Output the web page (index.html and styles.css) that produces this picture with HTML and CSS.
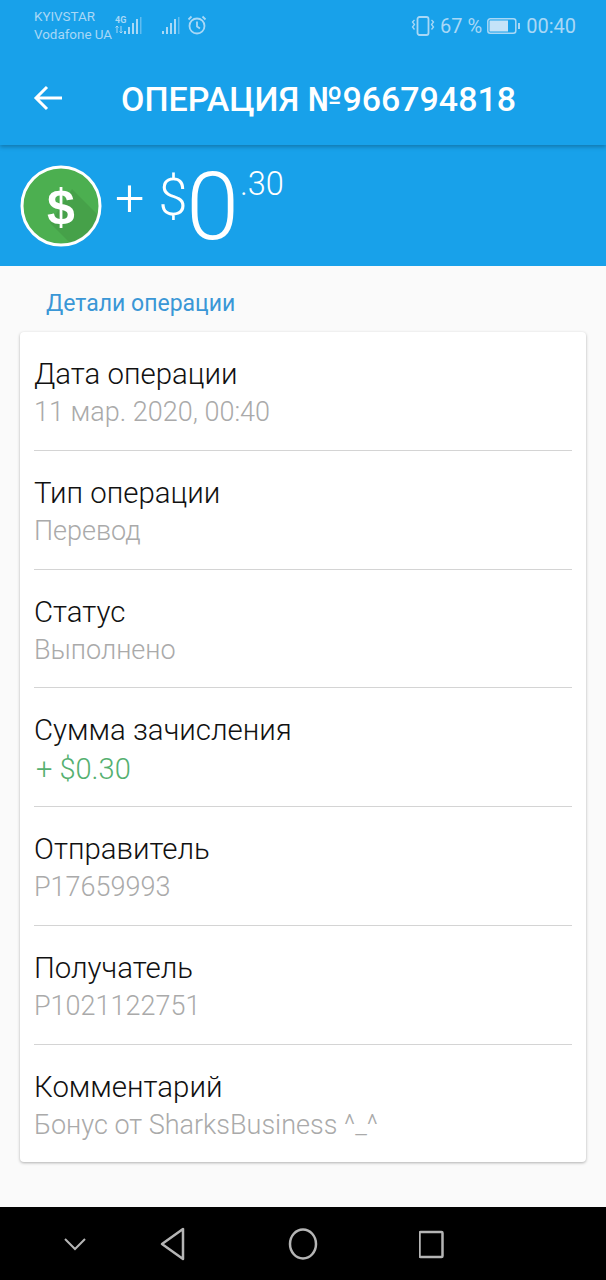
FILE: index.html
```html
<!DOCTYPE html>
<html lang="en">
  <head>
    <meta charset="UTF-8" />
    <meta name="viewport" content="width=device-width, initial-scale=1.0" />
    <title>Операция</title>
    <link rel="stylesheet" href="styles.css">
  </head>
  <body>
    <div class="screen">
      <header class="appbar">
        <div class="status">
          <div class="carriers">
            <span>KYIVSTAR</span>
            <span>Vodafone UA</span>
          </div>
          <svg class="status-signals" width="98" height="24" viewBox="0 0 98 24">
            <text x="1" y="9" class="net">4G</text>
            <path d="M3 12v7M1.500 13.500L3 12l1.500 1.500M7 12v7M5.500 17.500L7 19l1.500-1.500" fill="none" stroke="#a9d8f6" />
            <g fill="#a9d8f6">
              <rect x="10" y="17" width="2" height="3" />
              <rect x="14" y="13" width="2" height="7" />
              <rect x="18" y="9" width="2" height="11" />
              <rect x="22" y="5" width="2" height="15" />
              <rect x="26" y="3" width="1.500" height="17" opacity=".5" />
              <rect x="48" y="17" width="2" height="3" />
              <rect x="52" y="13" width="2" height="7" />
              <rect x="56" y="9" width="2" height="11" />
              <rect x="60" y="5" width="2" height="15" />
              <rect x="64" y="3" width="1.500" height="17" opacity=".5" />
            </g>
            <g fill="none" stroke="#a9d8f6" stroke-width="1.800">
              <circle cx="83" cy="12" r="7.500" />
              <path d="M83 7.500v5l3 2M74.500 5.500l3-3M91.500 5.500l-3-3" />
            </g>
          </svg>
          <div class="status-right">
            <svg width="24" height="24" viewBox="0 0 24 24" fill="none" stroke="#a9d8f6">
              <rect x="6.500" y="3" width="11" height="18" rx="2" stroke-width="1.800" />
              <path d="M3.500 6l-2 2 2 2.500-2 2.500 2 2.500M20.500 6l2 2-2 2.500 2 2.500-2 2.500" stroke-width="1.300" />
            </svg>
            <span class="battery-pct">67 %</span>
            <svg width="34" height="18" viewBox="0 0 34 18">
              <rect x=".800" y="1.800" width="28" height="14.500" rx="2.500" fill="none" stroke="#a9d8f6" stroke-width="1.500" />
              <rect x="2.500" y="3.500" width="18.500" height="11" fill="#c4e3f8" />
              <rect x="31" y="6" width="2" height="6" fill="#a9d8f6" />
            </svg>
            <span>00:40</span>
          </div>
        </div>
        <div class="toolbar">
          <svg class="back" width="30" height="26" viewBox="0 0 30 26" fill="none" stroke="#fff" stroke-width="3">
            <path d="M29 13H3M14 2L3 13l11 11" />
          </svg>
          <h1>ОПЕРАЦИЯ №966794818</h1>
        </div>
      </header>

      <section class="amount">
        <svg class="coin" width="82" height="82" viewBox="0 0 82 82">
          <circle cx="41" cy="41" r="39" fill="#4caf50" stroke="#fff" stroke-width="3" />
          <path d="M52 24l26 26A39 39 0 0 1 50 78L30 58z" fill="#000" opacity=".08" />
          <text x="41" y="59" text-anchor="middle" class="coin-sign">$</text>
        </svg>
        <span class="plus">+</span>
        <span class="dollar">$</span>
        <span class="whole">0</span>
        <span class="cents">.30</span>
      </section>

      <main class="content">
        <h2>Детали операции</h2>
        <div class="card">
          <div class="row">
            <div class="label">Дата операции</div>
            <div class="value">11 мар. 2020, 00:40</div>
          </div>
          <div class="row">
            <div class="label">Тип операции</div>
            <div class="value">Перевод</div>
          </div>
          <div class="row">
            <div class="label">Статус</div>
            <div class="value">Выполнено</div>
          </div>
          <div class="row">
            <div class="label">Сумма зачисления</div>
            <div class="value green">+ $0.30</div>
          </div>
          <div class="row">
            <div class="label">Отправитель</div>
            <div class="value">P17659993</div>
          </div>
          <div class="row">
            <div class="label">Получатель</div>
            <div class="value">P1021122751</div>
          </div>
          <div class="row">
            <div class="label">Комментарий</div>
            <div class="value">Бонус от SharksBusiness ^_^</div>
          </div>
        </div>
      </main>

      <nav class="navbar">
        <svg width="26" height="16" viewBox="0 0 26 16" fill="none" stroke="#b5b5b5" stroke-width="2">
          <path d="M3 3l10 10L23 3" />
        </svg>
        <svg width="28" height="34" viewBox="0 0 28 34" fill="none" stroke="#b5b5b5" stroke-width="2.500" stroke-linejoin="round">
          <path d="M24 2v30L3 17z" />
        </svg>
        <svg width="30" height="34" viewBox="0 0 30 34" fill="none" stroke="#b5b5b5" stroke-width="2.500">
          <ellipse cx="15" cy="17" rx="13" ry="14.500" />
        </svg>
        <svg width="28" height="30" viewBox="0 0 28 30" fill="none" stroke="#b5b5b5" stroke-width="2.500" stroke-linejoin="round">
          <rect x=".500" y="3" width="23" height="25" rx="1" />
        </svg>
      </nav>
    </div>
  </body>
</html>
```

FILE: styles.css
```css
html, body {
  margin: 0;
  padding: 0;
}
body {
  font-family: 'Roboto', sans-serif;
  background: #fafafa;
}
.screen {
  display: flex;
  flex-direction: column;
  width: 606px;
  height: 1280px;
  overflow: hidden;
}
.appbar {
  position: relative;
  z-index: 1;
  height: 145px;
  background: #18a1ea;
  box-shadow: 0 2px 4px rgba(0, 0, 0, 0.25);
}
.status {
  display: flex;
  align-items: center;
  height: 52px;
  padding: 0 30px 0 34px;
  color: #a9d8f6;
}
.carriers {
  display: flex;
  flex-direction: column;
  width: 79px;
  font-size: 13.400px;
  line-height: 18px;
  white-space: nowrap;
}
.net {
  font-size: 9px;
  font-weight: 700;
  fill: #a9d8f6;
}
.status-signals {
  flex: none;
  margin-left: 1px;
}
.status-right {
  display: flex;
  align-items: center;
  gap: 5px;
  margin-left: auto;
  font-size: 20px;
}
.toolbar {
  display: flex;
  align-items: center;
  height: 93px;
  padding-left: 33px;
}
.toolbar .back {
  flex: none;
  margin-bottom: 1px;
}
.toolbar h1 {
  margin: 2px 0 0 58px;
  color: #fff;
  font-size: 33.950px;
  font-weight: 500;
  white-space: nowrap;
}
.amount {
  display: flex;
  align-items: center;
  height: 121px;
  padding-left: 20px;
  color: #fff;
  background: #18a1ea;
  font-weight: 300;
}
.coin {
  flex: none;
}
.coin-sign {
  font-family: 'Liberation Sans', sans-serif;
  font-size: 50px;
  font-weight: bold;
  fill: #fff;
}
.plus {
  margin: 0 14px 14px 13px;
  font-size: 52px;
}
.dollar {
  margin-bottom: 16px;
  font-size: 52px;
}
.whole {
  margin: 2px 0 0 -1px;
  font-size: 95px;
  line-height: 100px;
}
.cents {
  align-self: flex-start;
  margin: 20px 0 0 1px;
  font-size: 32.500px;
}
.content {
  flex: 1;
  padding: 0 20px;
}
.content h2 {
  margin: 0;
  height: 66px;
  padding: 23px 0 0 26px;
  box-sizing: border-box;
  color: #3a97d6;
  font-size: 23px;
  line-height: 30px;
  font-weight: 400;
}
.card {
  padding: 0 14px;
  background: #fff;
  border-radius: 4px;
  box-shadow: 0 1px 3px rgba(0, 0, 0, 0.3);
}
.row {
  box-sizing: border-box;
  height: 118.800px;
  padding-top: 23px;
  border-bottom: 1px solid #d4d4d4;
}
.row:last-child {
  height: 117.200px;
  border-bottom: 0;
}
.label {
  color: #111;
  font-size: 29.400px;
  font-weight: 300;
  line-height: 38px;
}
.value {
  color: #aaa;
  font-size: 27px;
  font-weight: 300;
  line-height: 38px;
}
.value.green {
  margin-left: 2px;
  color: #55b070;
  font-size: 29px;
  line-height: 41px;
}
.navbar {
  display: grid;
  grid-template-columns: 66px 130px 130px 130px;
  justify-items: center;
  align-items: center;
  height: 73px;
  padding-left: 42px;
  background: #000;
}
```
